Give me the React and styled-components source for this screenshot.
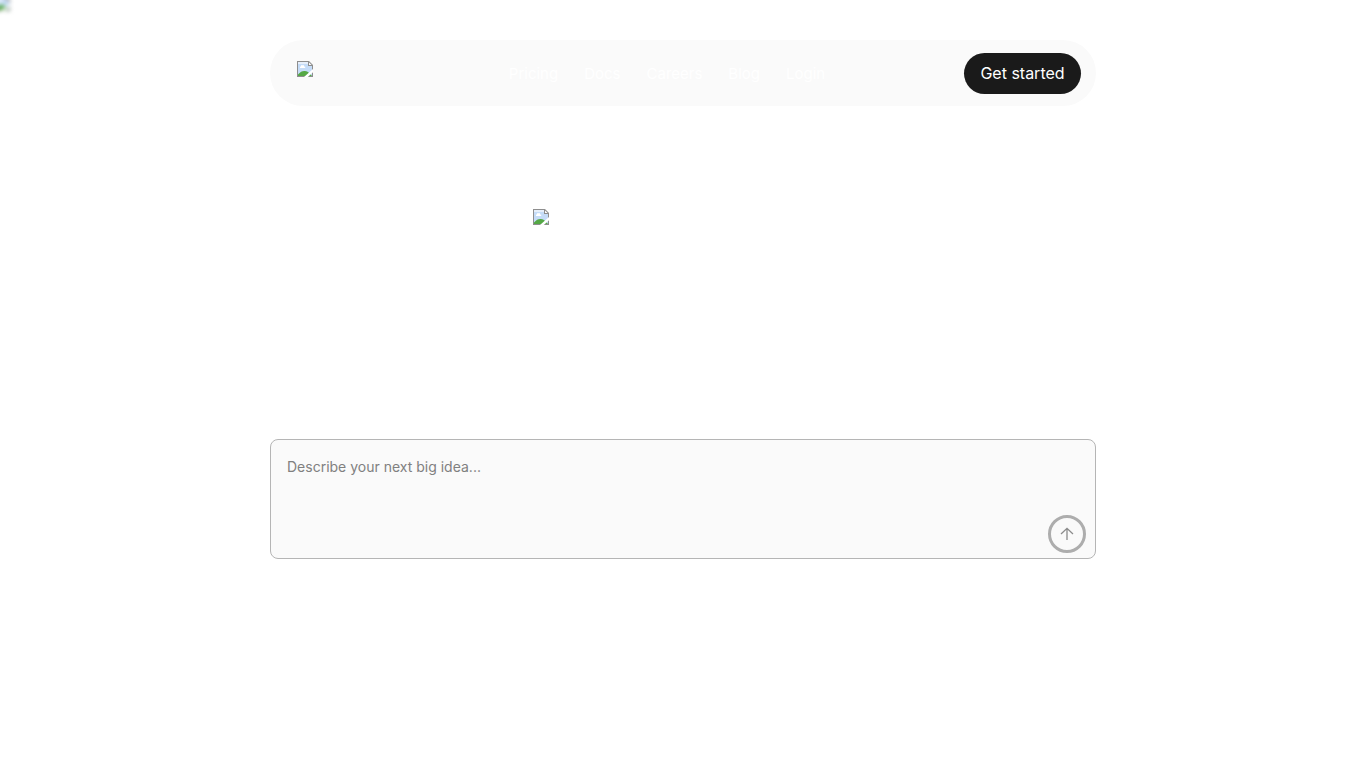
import React from "react";
import styled, { createGlobalStyle } from "styled-components";

const GlobalStyle = createGlobalStyle`
  *, *::before, *::after { box-sizing: border-box; }
  body {
    margin: 0;
    background: #ffffff;
    color: #ffffff;
    font-family: Inter, "Liberation Sans", sans-serif;
    font-size: 16px;
  }
`;

const Page = styled.div`
  position: relative;
  min-height: 100vh;
  overflow: hidden;
  padding: 40px 24px;
`;

const Backdrop = styled.div`
  position: absolute;
  top: -5px;
  left: -6px;
  filter: blur(2px);
`;

const Content = styled.div`
  max-width: 826px;
  margin: 0 auto;
`;

const Header = styled.header`
  display: flex;
  align-items: center;
  justify-content: space-between;
  height: 66px;
  padding: 0 15px 0 27px;
  border-radius: 33px;
  background: #fafafa;
`;

const HomeLink = styled.a`
  display: block;
  width: 73px;
  height: 24px;
`;

const Nav = styled.nav`
  display: flex;
  gap: 26px;
  padding-top: 2px;
`;

const NavLink = styled.a`
  color: #ffffff;
  font-size: 15px;
  line-height: 24px;
  text-decoration: none;
`;

const StartButton = styled.button`
  width: 117px;
  height: 41px;
  padding: 0;
  border: 0;
  border-radius: 21px;
  background: #1a1a1a;
  color: #ffffff;
  font: inherit;
  cursor: pointer;
`;

const Main = styled.main`
  padding-top: 103px;
`;

const HeroLogo = styled.div`
  width: 300px;
  max-width: 100%;
  height: 230px;
  margin: 0 auto;
`;

const Picture = styled.svg`
  display: block;
  width: 16px;
  height: 16px;
`;

const PromptForm = styled.form`
  position: relative;
  display: flex;
`;

const PromptBox = styled.textarea`
  width: 100%;
  height: 120px;
  padding: 16px;
  border: 1px solid #b5b5b5;
  border-radius: 8px;
  outline: 0;
  resize: none;
  background: #fafafa;
  color: #1a1a1a;
  font-family: inherit;
  font-size: 14px;
  line-height: 22px;

  &::placeholder {
    color: #808080;
    opacity: 1;
  }
`;

const SendButton = styled.button`
  position: absolute;
  right: 10px;
  bottom: 6px;
  display: flex;
  align-items: center;
  justify-content: center;
  width: 38px;
  height: 38px;
  padding: 0;
  border: 3px solid #adadad;
  border-radius: 50%;
  background: #fafafa;
  color: #8c8c8c;
  cursor: pointer;
`;

const links = ["Pricing", "Docs", "Careers", "Blog", "Login"];

function MissingPicture() {
  return (
    <Picture viewBox="0 0 16 16" aria-hidden="true">
      <path d="M0 0h12l4 4v12H0z" fill="#8e8e8e" />
      <path d="M1 1h10v4h4v10H1z" fill="#c5dcf8" />
      <path d="M1 1h10v2H1z" fill="#e6effb" />
      <path d="M12 1.4V4h2.6z" fill="#fff" />
      <path d="M3 7V5.5h1V4.2h3v1.3h1.2V7z" fill="#fff" />
      <path d="M1 15v-1.5C3.5 10.8 5.5 9.7 8 10c3 .3 5 2.4 7 5z" fill="#55a845" />
      <path d="M7 16l9-8v3.2L10.8 16z" fill="#fff" />
    </Picture>
  );
}

export default function App() {
  return (
    <>
      <GlobalStyle />
      <Page>
        <Backdrop>
          <MissingPicture />
        </Backdrop>
        <Content>
          <Header>
            <HomeLink href="#" aria-label="Home">
              <MissingPicture />
            </HomeLink>
            <Nav aria-label="Main">
              {links.map((name) => (
                <NavLink key={name} href={`#${name.toLowerCase()}`}>
                  {name}
                </NavLink>
              ))}
            </Nav>
            <StartButton type="button">Get started</StartButton>
          </Header>
          <Main>
            <HeroLogo>
              <MissingPicture />
            </HeroLogo>
            <PromptForm onSubmit={(event) => event.preventDefault()}>
              <PromptBox
                aria-label="Describe your next big idea"
                placeholder="Describe your next big idea..."
              />
              <SendButton type="submit" aria-label="Send">
                <svg
                  width="14"
                  height="14"
                  viewBox="0 0 14 14"
                  fill="none"
                  stroke="currentColor"
                  strokeWidth="1.3"
                  aria-hidden="true"
                >
                  <path d="M7 13V1.5M1 7l6-5.7L13 7" />
                </svg>
              </SendButton>
            </PromptForm>
          </Main>
        </Content>
      </Page>
    </>
  );
}
